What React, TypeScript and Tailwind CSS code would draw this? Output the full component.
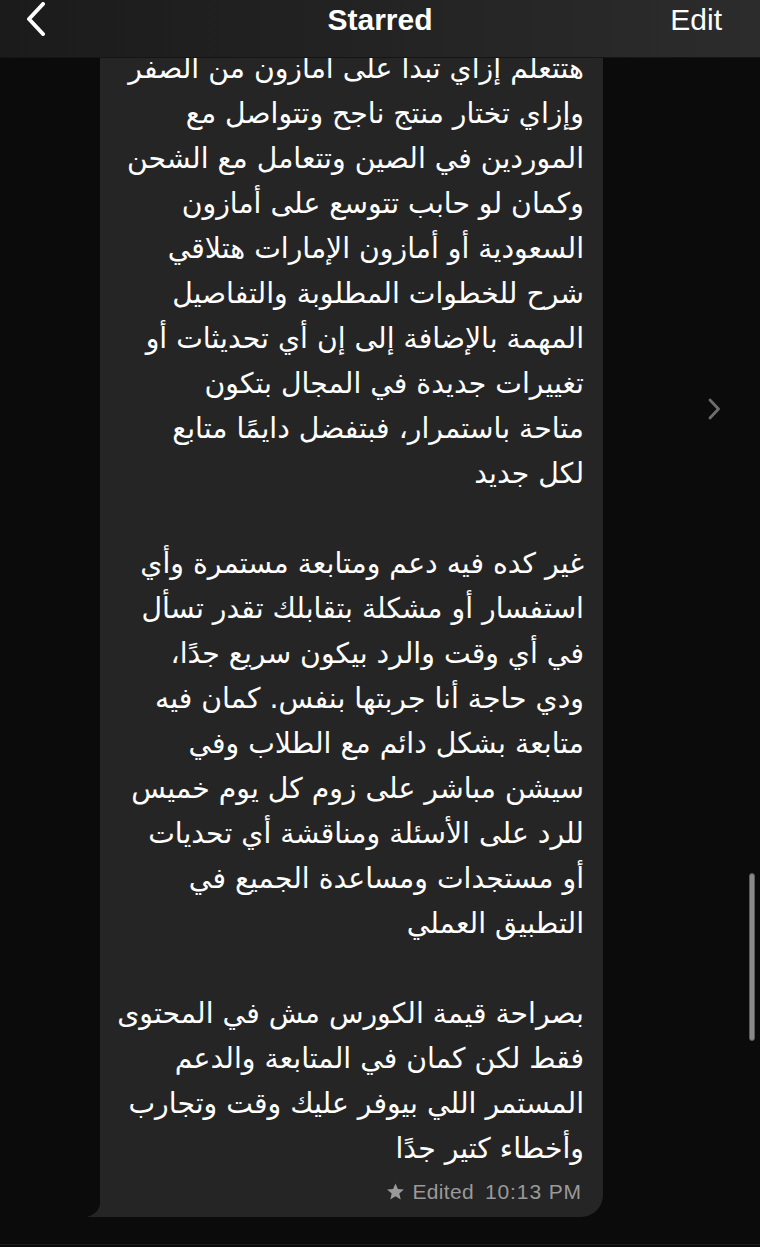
import React from "react";

const lines: string[] = [
  "هتتعلم إزاي تبدا على امازون من الصفر",
  "وإزاي تختار منتج ناجح وتتواصل مع",
  "الموردين في الصين وتتعامل مع الشحن",
  "وكمان لو حابب تتوسع على أمازون",
  "السعودية أو أمازون الإمارات هتلاقي",
  "شرح للخطوات المطلوبة والتفاصيل",
  "المهمة بالإضافة إلى إن أي تحديثات أو",
  "تغييرات جديدة في المجال بتكون",
  "متاحة باستمرار، فبتفضل دايمًا متابع",
  "لكل جديد",
  "",
  "غير كده فيه دعم ومتابعة مستمرة وأي",
  "استفسار أو مشكلة بتقابلك تقدر تسأل",
  "في أي وقت والرد بيكون سريع جدًا،",
  "ودي حاجة أنا جربتها بنفس. كمان فيه",
  "متابعة بشكل دائم مع الطلاب وفي",
  "سيشن مباشر على زوم كل يوم خميس",
  "للرد على الأسئلة ومناقشة أي تحديات",
  "أو مستجدات ومساعدة الجميع في",
  "التطبيق العملي",
  "",
  "بصراحة قيمة الكورس مش في المحتوى",
  "فقط لكن كمان في المتابعة والدعم",
  "المستمر اللي بيوفر عليك وقت وتجارب",
  "وأخطاء كتير جدًا",
];

export default function App() {
  return (
    <div className="relative w-[760px] h-[1247px] overflow-hidden bg-[#0b0b0b] flex flex-col">
      {/* Header */}
      <div className="relative z-10 h-[58px] shrink-0 bg-gradient-to-r from-[#1b1b1b] via-[#232323] to-[#2c2c2c] border-b border-[#151515] grid grid-cols-[1fr_auto_1fr] items-start px-[25px] pt-[2px] font-['Liberation_Sans',Arial,sans-serif] text-white">
        <div className="flex">
          <svg width="22" height="34" viewBox="0 0 22 34">
            <path d="M18 2 L4 17 L18 32" fill="none" stroke="#ffffff" strokeWidth="4" strokeLinecap="round" strokeLinejoin="round" />
          </svg>
        </div>
        <div className="text-center text-[30px] font-bold leading-[36px]">Starred</div>
        <div className="flex justify-end">
          <span className="text-[30px] leading-[36px] mr-[13px]">Edit</span>
        </div>
      </div>

      {/* Content */}
      <div className="flex flex-row -mt-[12px]">
        <div className="relative ml-[100px] w-[503px] bg-[#252525] rounded-br-[22px] pr-[19px] pl-[14px] pb-[12px]">
          <div dir="rtl" className="text-right text-white text-[28.3px] leading-[45px] font-['DejaVu_Sans',sans-serif] whitespace-nowrap">
            {lines.map((l, i) => (
              <div key={i} className="h-[45px]">{l}</div>
            ))}
          </div>
          <div className="flex justify-end items-center text-[#9a9a9a] text-[21px] leading-[26px] font-['Liberation_Sans',Arial,sans-serif] mt-[8px] pr-[2px]">
            <svg width="19" height="19" viewBox="0 0 24 24" className="-mt-[1px] mr-[8px]">
              <path d="M12 1.8 L15 8.9 L22.6 9.5 L16.8 14.5 L18.6 22 L12 18 L5.4 22 L7.2 14.5 L1.4 9.5 L9 8.9 Z" fill="#9a9a9a" />
            </svg>
            <span className="tracking-[0.3px]">Edited</span>
            <span className="ml-[11px] tracking-[0.9px]">10:13 PM</span>
          </div>
          <svg className="absolute left-[-13px] bottom-0" width="28" height="26" viewBox="0 0 28 26">
            <path d="M13 0 L13 12 C13 18 9 23 0 26 L28 26 L28 0 Z" fill="#252525" />
          </svg>
        </div>
        <div className="flex-1 pl-[104px] pt-[352px]">
          <svg width="15" height="22" viewBox="0 0 15 22">
            <path d="M3 2 L11.5 11 L3 20" fill="none" stroke="#6e6e6e" strokeWidth="2.8" strokeLinecap="round" strokeLinejoin="round" />
          </svg>
        </div>
      </div>

      {/* Scrollbar */}
      <div className="absolute left-[749px] top-[873px] w-[6px] h-[168px] rounded-full bg-[#8a8a8a] border border-[#5a5a5a]" />
      <div className="absolute left-0 bottom-[2px] w-full h-[1px] bg-[#1c1c1c]" />
    </div>
  );
}
